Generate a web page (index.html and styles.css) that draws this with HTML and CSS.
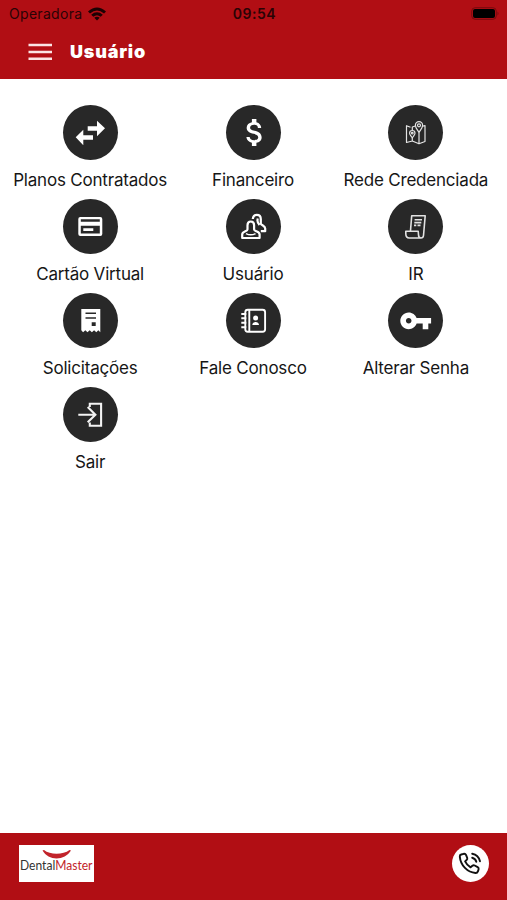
FILE: index.html
```html
<!DOCTYPE html>
<html lang="pt-BR">
<head>
<meta charset="utf-8">
<title>Usuário</title>
<link rel="stylesheet" href="styles.css">
</head>
<body>
<div class="app">
  <header class="top">
    <div class="status">
      <div class="carrier"><span>Operadora</span>
        <svg class="wifi" width="18" height="14" viewBox="0 0 18 14"><path d="M0 4.4Q9-3.200 18 4.400L16 6.500Q9 .6 2 6.500Z"/><path d="M3.200 7.700Q9 2.800 14.800 7.700L12.700 9.800Q9 6.800 5.300 9.800Z"/><path d="M6.300 10.800Q9 8.800 11.700 10.800L9 13.600Z"/></svg>
      </div>
      <time class="clock">09:54</time>
      <svg class="battery" width="29" height="13" viewBox="0 0 29 13"><rect class="shell" x=".7" y=".7" width="24.600" height="11.600" rx="3.500"/><rect x="2" y="2" width="22" height="9" rx="2"/><path class="cap" d="M26.500 4.500q2 2 0 4z"/></svg>
    </div>
    <div class="bar">
      <svg class="menu" width="24" height="18" viewBox="0 0 24 18"><path d="M.5 2H24M.5 9H24M.5 15.700H24"/></svg>
      <h1>Usuário</h1>
    </div>
  </header>
  <main class="grid">
    <a class="item"><svg class="icon" viewBox="0 0 55 55"><path class="fill" d="M24.700 21.200h9.300v-5.500l8 7.600-8 7.900v-5.500h-9.300zM30 30.200h-9.700v-5.500l-7.600 7.600 7.600 7.900v-5.500H30z"/></svg><span>Planos Contratados</span></a>
    <a class="item"><svg class="icon" viewBox="0 0 55 55"><path class="fill" transform="translate(10.900 9.500) scale(1.500)" d="M11.800 10.900c-2.270-.59-3-1.200-3-2.150 0-1.090 1.010-1.850 2.700-1.850 1.780 0 2.440.85 2.500 2.100h2.210c-.07-1.720-1.120-3.300-3.210-3.810V3h-3v2.160c-1.940.42-3.500 1.680-3.500 3.610 0 2.310 1.910 3.460 4.700 4.130 2.500.6 3 1.480 3 2.410 0 .69-.49 1.790-2.700 1.790-2.060 0-2.870-.92-2.980-2.100h-2.200c.12 2.190 1.760 3.420 3.680 3.830V21h3v-2.150c1.950-.37 3.500-1.500 3.500-3.550 0-2.840-2.430-3.810-4.700-4.400z"/></svg><span>Financeiro</span></a>
    <a class="item"><svg class="icon" viewBox="0 0 55 55"><g class="thin"><path d="M22.500 22.300l-4-1.600v16.800l5.800-1.500 6.700 2.800 6-2.300V20.500l-3 .8M24.300 36v-3M31 27.500v11M24.300 25v-3l3-1"/><path d="M24.300 33c-1.500-2.500-2.700-3.200-2.700-4.800a2.700 2.700 0 0 1 5.400 0c0 1.600-1.200 2.300-2.700 4.800zM31 27.500c-2-3.300-3.600-4.800-3.600-7.200a3.600 3.600 0 0 1 7.200 0c0 2.400-1.600 3.900-3.600 7.200z"/><circle cx="24.300" cy="28.200" r=".8"/><circle cx="31" cy="20.300" r="1.500"/></g></svg><span>Rede Credenciada</span></a>
    <a class="item"><svg class="icon" viewBox="0 0 55 55"><path class="fill" fill-rule="evenodd" d="M17.300 18h20a2 2 0 0 1 2 2v15a2 2 0 0 1-2 2h-20a2 2 0 0 1-2-2V20a2 2 0 0 1 2-2zM17.800 20.300v2.400h19v-2.400zM17.800 26.800v7.700h19v-7.700zM20.300 29.300h10v2.700h-10z"/></svg><span>Cartão Virtual</span></a>
    <a class="item"><svg class="icon" viewBox="0 0 55 55"><g class="line"><path d="M26.800 20v-.2c.3-2.500 1.800-4 4-4s4 1.600 4 4.200v4.500c0 1.800 4.400 2 4.400 5v2.700h-4.400M31.800 19.500c-.8 2.500-.3 4.500 1.700 6.500"/><path d="M16.200 39v-3.500c0-3.300 5.300-3 5.300-5v-4.300c0-2.300 1.200-3.700 3.300-3.700s3.300 1.400 3.300 3.700v4.300c0 2 5.500 1.700 5.500 5V39z"/></g><path class="smile" d="M20 34.600c3 1.600 6.500 1.600 9.500 0"/></svg><span>Usuário</span></a>
    <a class="item"><svg class="icon" viewBox="0 0 55 55"><g class="paper"><path d="M22.500 31.600L23.700 16.800h13.500L35.500 36.500c-.2 1.800-1.300 2.500-2.500 2.500-1.700 0-2.500-1.200-2.500-3.200l-.3-3.500H17.800v2.500c0 2.800 1.200 4.200 3.500 4.200H33"/><path d="M26.600 20.800h7.400M26.300 23.600h7M26 26.400h2.300M29.500 26.400h3"/></g></svg><span>IR</span></a>
    <a class="item"><svg class="icon" viewBox="0 0 55 55"><path class="fill" fill-rule="evenodd" d="M18.300 16h19v23.300l-2-2-2 2-2.200-2-2.200 2-2.200-2-2.200 2-2.200-2-2.200 2-1.800-2zM22.500 19.500V21h10.500v-1.500zM22.500 24.300v1.500h10.500v-1.500zM28.700 29.300v3.800h4v-3.800z"/></svg><span>Solicitações</span></a>
    <a class="item"><svg class="icon" viewBox="0 0 55 55"><g class="book"><rect x="19.300" y="16.800" width="19.800" height="21.900" rx="2.500"/><path d="M23.300 17v21.500M15.300 21h5M15.300 25.300h5M15.300 29.700h5M15.300 34.200h5"/></g><circle class="fill" cx="29.600" cy="25" r="2.500"/><path class="fill" d="M26.300 32c0-4 6.700-4 6.700 0z"/></svg><span>Fale Conosco</span></a>
    <a class="item"><svg class="icon" viewBox="0 0 55 55"><path class="fill" transform="translate(10.900 11) scale(1.400)" d="M12.650 10C11.830 7.670 9.610 6 7 6c-3.310 0-6 2.690-6 6s2.690 6 6 6c2.610 0 4.830-1.670 5.650-4H17v4h4v-4h2v-4H12.650zM7 14c-1.100 0-2-.9-2-2s.9-2 2-2 2 .9 2 2-.9 2-2 2z"/></svg><span>Alterar Senha</span></a>
    <a class="item"><svg class="icon" viewBox="0 0 55 55"><g class="exit"><path d="M26.800 20v-3.300h11.300v22H26.800v-3.300"/><path d="M15.300 27.700h17M24.700 20l7.700 7.700-7.700 7.600"/></g></svg><span>Sair</span></a>
  </main>
  <footer class="foot">
    <svg class="logo" width="75" height="37" viewBox="0 0 75 37"><path d="M23.500 5.500l1.500-.5c6 5 19 5 25.500 0l1.500.5c-6.500 10.500-22.500 10.500-28.500 0z"/><text x="1" y="24.500" textLength="72.500" lengthAdjust="spacingAndGlyphs">Dental<tspan>Master</tspan></text></svg>
    <a class="call"><svg width="37" height="37" viewBox="0 0 37 37"><path d="M9.200 9.500l2.600-.7c1-.2 1.800.2 2.200 1.100l1.200 2.900c.3.900.1 1.600-.6 2.200l-1.500 1.400c1.200 2.600 3 4.500 5.500 5.900l1.800-1.500c.7-.6 1.500-.7 2.300-.3l3 1.700c.9.500 1.200 1.200.9 2.200l-.7 2c-.4 1.100-1.200 1.700-2.400 1.600C15.500 27.500 8.600 20.500 7.800 11.600c-.1-1.100.4-1.800 1.400-2.100zM20.200 8.700c4.400.8 6.800 3.300 7.800 7.600M20.200 12.700c2.200.5 3.600 1.800 4.100 4"/></svg></a>
  </footer>
</div>
</body>
</html>
```
FILE: styles.css
```css
* { box-sizing: border-box; }
body { margin: 0; background: #fff; font-family: Inter, "Liberation Sans", sans-serif; }
.app { height: 900px; display: flex; flex-direction: column; }

.top { height: 79.300px; background: #b10e14; }
.status { height: 27px; padding: 0 7px 0 9px; display: grid; grid-template-columns: 1fr auto 1fr; align-items: center; color: #2a0305; }
.carrier { display: flex; align-items: center; gap: 6px; font-size: 14px; letter-spacing: .3px; }
.wifi { fill: #1c0203; }
.clock { font-size: 14px; font-weight: 600; letter-spacing: .5px; }
.battery { justify-self: end; }
.battery .shell { fill: none; stroke: #780a0e; stroke-width: 1; }
.battery .cap { fill: #780a0e; }
.bar { height: 50px; padding-left: 28px; display: flex; align-items: center; }
.menu { fill: none; stroke: #fbe3e4; stroke-width: 2.600; }
h1 { margin: 0 0 0 18px; color: #fff; font-size: 18px; line-height: 24px; font-weight: 900; letter-spacing: .8px; }

.grid { flex: 1; padding: 25.700px 9.700px 0 8.700px; display: grid; grid-template-columns: repeat(3, 1fr); grid-auto-rows: 94.100px; align-content: start; }
.item { display: flex; flex-direction: column; align-items: center; color: #161616; font-size: 17px; line-height: 22px; letter-spacing: -.2px; white-space: nowrap; }
.item span { margin-top: 9px; }
.icon { width: 55px; height: 55px; flex: none; border-radius: 50%; background: #282828; fill: none; stroke-linejoin: round; }
.fill { fill: #fff; }
.thin { stroke: #e4e4e4; stroke-width: 1.200; }
.line { stroke: #fff; stroke-width: 2.200; }
.smile { stroke: #fff; stroke-width: 1.500; }
.paper { stroke: #e2e2e2; stroke-width: 1.600; }
.book { stroke: #fff; stroke-width: 1.900; }
.exit { stroke: #f4f4f4; stroke-width: 2.100; stroke-linejoin: miter; }

.foot { height: 67.500px; padding: 12.500px 18px 0 19px; background: #b10e14; display: flex; justify-content: space-between; align-items: flex-start; }
.logo { background: #fff; fill: #c2242b; }
.logo text { font: 12.500px Lato, sans-serif; fill: #333; }
.logo tspan { fill: #c2242b; }
.call { width: 37px; height: 37px; border-radius: 50%; background: #fff; }
.call svg { display: block; fill: none; stroke: #111; stroke-width: 1.900; stroke-linecap: round; stroke-linejoin: round; }
```
